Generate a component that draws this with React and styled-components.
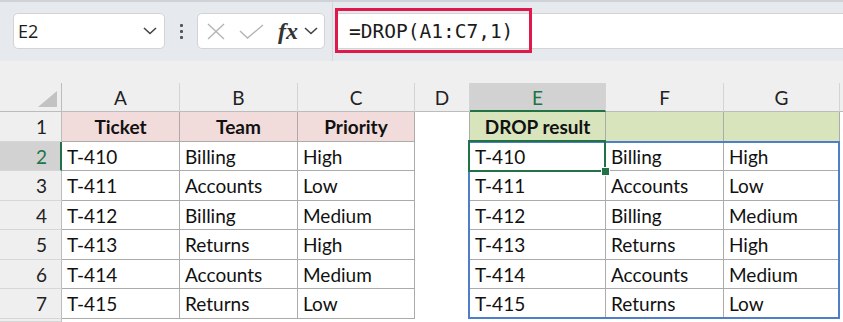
import React from 'react';
import styled, { createGlobalStyle } from 'styled-components';

const GlobalStyle = createGlobalStyle`
    body {
        margin: 0;
        background: #efefef;
        overflow: hidden;
    }
`;

const GREEN = '#217346';
const GRID = '#ababab';

const Page = styled.div`
    width: 843px;
    height: 322px;
    display: flex;
    flex-direction: column;
    background: #efefef;
    font-family: Lato, 'Liberation Sans', sans-serif;
`;

const Toolbar = styled.div`
    height: 61px;
    flex-shrink: 0;
    box-sizing: border-box;
    display: flex;
    align-items: flex-start;
    padding: 13px 0 0 13px;
    background: #e6e9ed;
    border-top: 2px solid #cfd2d6;
`;

const Box = styled.div`
    box-sizing: border-box;
    height: 36px;
    margin-top: -2px;
    background: #fff;
    border: 1px solid #d3d3d3;
    border-radius: 5px;
    display: flex;
    align-items: center;
`;

const NameBox = styled(Box)`
    width: 152px;
    padding: 0 7px 0 4px;
    justify-content: space-between;
    font: 18px 'Open Sans', sans-serif;
    color: #1b1b1b;
`;

const Dots = styled.div`
    width: 32px;
    height: 32px;
    display: flex;
    flex-direction: column;
    align-items: center;
    justify-content: center;
    gap: 3px;

    span {
        width: 3px;
        height: 3px;
        border-radius: 1px;
        background: #555;
    }
`;

const FxBox = styled(Box)`
    width: 128px;
    padding: 0 5px 0 9px;
`;

const Fx = styled.span`
    font: italic 600 24px 'Liberation Serif', serif;
    color: #333;
    margin: 0 6px 0 14px;
    line-height: 1;
`;

const Divider = styled.div`
    align-self: stretch;
    width: 1px;
    margin: -13px 2px 0 7px;
    background: #d4d7db;
`;

const FormulaInput = styled(Box)`
    position: relative;
    flex: 1;
    border-right: none;
    border-radius: 5px 0 0 5px;
    padding-left: 13px;
    font: 19.5px 'DejaVu Sans Mono', monospace;
    color: #1b1b1b;
`;

const Highlight = styled.div`
    position: absolute;
    left: -1px;
    top: -6px;
    width: 197px;
    height: 45px;
    box-sizing: border-box;
    border: 3px solid #e0194c;
`;

const Sheet = styled.div`
    position: relative;
    margin-top: 22px;
    flex: 1;
    display: grid;
    grid-template-columns: 62px 118px 118px 117px 55px 136px 118px 116px 1fr;
    grid-template-rows: 29px 30px 29px 30px 29px 30px 29px 30px 1fr;
`;

const Corner = styled.div`
    box-sizing: border-box;
    border-right: 1px solid #bcbcbc;
    border-bottom: 1px solid #bcbcbc;
    display: flex;
    align-items: flex-end;
    justify-content: flex-end;
    padding: 0 4px 4px 0;
`;

const ColHead = styled.div`
    box-sizing: border-box;
    background: ${p => (p.$active ? '#d2d2d2' : '#efefef')};
    color: ${p => (p.$active ? GREEN : '#222')};
    border-right: 1px solid #d4d4d4;
    border-bottom: ${p => (p.$active ? `2px solid ${GREEN}` : '1px solid #bcbcbc')};
    display: flex;
    align-items: center;
    justify-content: center;
    font-size: 19px;
    padding-top: ${p => (p.$active ? 1 : 0)}px;
`;

const RowHead = styled.div`
    box-sizing: border-box;
    background: ${p => (p.$active ? '#d2d2d2' : '#efefef')};
    color: ${p => (p.$active ? GREEN : '#222')};
    border-right: ${p => (p.$active ? `2px solid ${GREEN}` : '1px solid #bcbcbc')};
    border-bottom: 1px solid #d6d6d6;
    display: flex;
    align-items: center;
    justify-content: flex-end;
    padding-right: ${p => (p.$active ? 13 : 14)}px;
    font-size: 19px;
`;

const Cell = styled.div`
    box-sizing: border-box;
    background: ${p => p.$fill || '#fff'};
    border-right: 1px solid ${p => p.$edge || 'transparent'};
    border-bottom: 1px solid ${p => p.$floor || 'transparent'};
    display: flex;
    align-items: center;
    justify-content: ${p => (p.$center ? 'center' : 'flex-start')};
    padding-left: ${p => (p.$center ? 0 : 5)}px;
    font-size: 19px;
    font-weight: ${p => (p.$bold ? 700 : 400)};
    color: #111;
    white-space: nowrap;
    overflow: hidden;
`;

const SpillRange = styled.div`
    position: absolute;
    left: 468px;
    top: 58px;
    width: 372px;
    height: 178px;
    box-sizing: border-box;
    border: 2px solid #4f7ec8;
    pointer-events: none;
`;

const ActiveCell = styled.div`
    position: absolute;
    left: 468px;
    top: 57px;
    width: 138px;
    height: 32px;
    box-sizing: border-box;
    border: 2px solid ${GREEN};
    pointer-events: none;
`;

const FillHandle = styled.div`
    position: absolute;
    left: 601px;
    top: 84px;
    width: 7px;
    height: 7px;
    background: ${GREEN};
    border: 1px solid #fff;
`;

const Chevron = () => (
    <svg width="14" height="8" viewBox="0 0 14 8">
        <polyline points="1,1 7,6.5 13,1" fill="none" stroke="#444" strokeWidth="1.6" />
    </svg>
);

const CrossIcon = () => (
    <svg width="18" height="17" viewBox="0 0 18 17">
        <path d="M1 1 L17 16 M17 1 L1 16" stroke="#b4b4b4" strokeWidth="1.4" fill="none" />
    </svg>
);

const CheckIcon = () => (
    <svg width="25" height="15" viewBox="0 0 25 15" style={{ marginLeft: 14 }}>
        <polyline points="1,7 8.5,14 24,1" stroke="#b4b4b4" strokeWidth="1.4" fill="none" />
    </svg>
);

const columns = ['A', 'B', 'C', 'D', 'E', 'F', 'G', ''];

const data = [
    ['T-410', 'Billing', 'High'],
    ['T-411', 'Accounts', 'Low'],
    ['T-412', 'Billing', 'Medium'],
    ['T-413', 'Returns', 'High'],
    ['T-414', 'Accounts', 'Medium'],
    ['T-415', 'Returns', 'Low'],
];

const App = () => {
    return (
        <Page>
            <GlobalStyle />
            <Toolbar>
                <NameBox>
                    <span>E2</span>
                    <Chevron />
                </NameBox>
                <Dots>
                    <span />
                    <span />
                    <span />
                </Dots>
                <FxBox>
                    <CrossIcon />
                    <CheckIcon />
                    <Fx>fx</Fx>
                    <Chevron />
                </FxBox>
                <Divider />
                <FormulaInput>
                    =DROP(A1:C7,1)
                    <Highlight />
                </FormulaInput>
            </Toolbar>

            <Sheet>
                <Corner>
                    <svg width="19" height="16" viewBox="0 0 19 16">
                        <polygon points="19,0 19,16 0,16" fill="#c2c2c2" />
                    </svg>
                </Corner>
                {columns.map((c, i) => (
                    <ColHead key={i} $active={c === 'E'}>{c}</ColHead>
                ))}

                <RowHead>1</RowHead>
                {['Ticket', 'Team', 'Priority'].map(h => (
                    <Cell key={h} $fill="#f2dcdb" $edge={GRID} $floor={GRID} $bold $center>{h}</Cell>
                ))}
                <Cell $edge={GRID} />
                <Cell $fill="#d8e4bc" $edge={GRID} $floor={GRID} $bold $center>DROP result</Cell>
                <Cell $fill="#d8e4bc" $edge={GRID} $floor={GRID} />
                <Cell $fill="#d8e4bc" $edge={GRID} $floor={GRID} />
                <Cell />

                {data.map((row, r) => (
                    <React.Fragment key={r}>
                        <RowHead $active={r === 0}>{r + 2}</RowHead>
                        {row.map((v, i) => (
                            <Cell key={`l${i}`} $edge={GRID} $floor={GRID}>{v}</Cell>
                        ))}
                        <Cell $edge={GRID} />
                        {row.map((v, i) => (
                            <Cell key={`r${i}`} $edge={GRID} $floor={GRID}>{v}</Cell>
                        ))}
                        <Cell />
                    </React.Fragment>
                ))}

                <RowHead />
                {columns.map((c, i) => (
                    <Cell key={`e${i}`} />
                ))}

                <SpillRange />
                <ActiveCell />
                <FillHandle />
            </Sheet>
        </Page>
    );
};

export default App;
